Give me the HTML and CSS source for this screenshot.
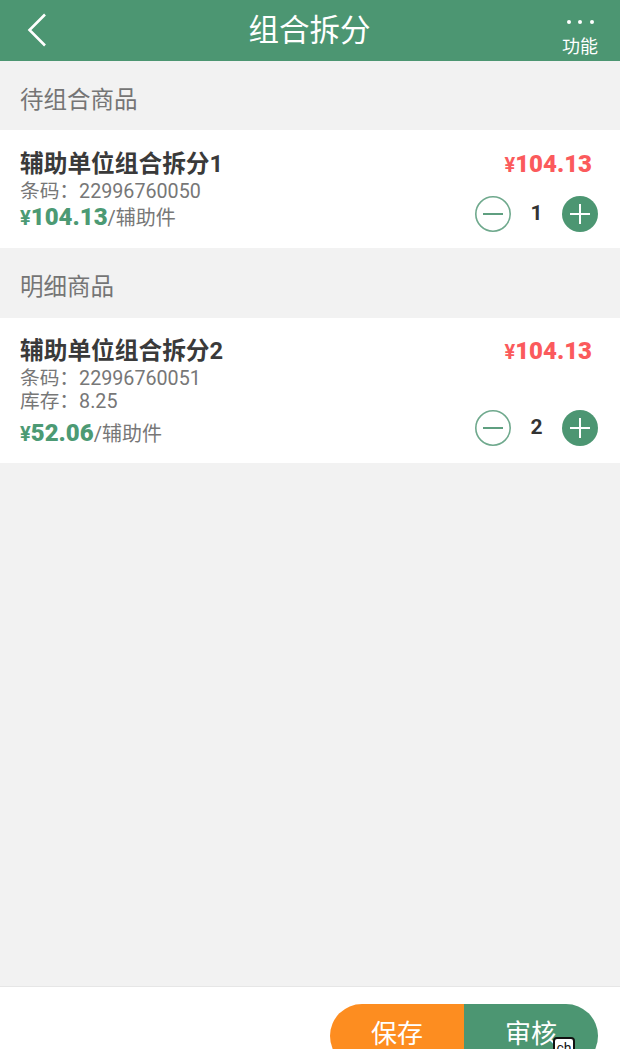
FILE: index.html
```html
<!DOCTYPE html>
<html>
  <head>
    <title>组合拆分</title>
    <link rel="stylesheet" href="styles.css">
  </head>
  <body class="page">
    <div class="topbar">
      <svg class="back" width="22" height="34" viewBox="0 0 22 34"><path d="M19 1.5 L3.5 17 L19 32.5" fill="none" stroke="#fff" stroke-width="2.6"/></svg>
      <div class="title">组合拆分</div>
      <div class="func">
        <div class="dots"><i></i><i></i><i></i></div>
        <div class="func-text">功能</div>
      </div>
    </div>

    <div class="section">待组合商品</div>
    <div class="card card-one">
      <div class="info">
        <div class="name">辅助单位组合拆分1</div>
        <div class="sub">条码：22996760050</div>
        <div class="price-line"><span class="price">¥<b>104.13</b></span>/辅助件</div>
      </div>
      <div class="side">
        <div class="total">¥<b>104.13</b></div>
        <div class="stepper">
          <svg width="36" height="36" viewBox="0 0 36 36"><circle cx="18" cy="18" r="17.2" fill="#fff" stroke="#6fa98d" stroke-width="1.6"/><path d="M8 18 H28" stroke="#5f9f80" stroke-width="2"/></svg>
          <span class="qty">1</span>
          <svg width="36" height="36" viewBox="0 0 36 36"><circle cx="18" cy="18" r="18" fill="#4c9672"/><path d="M8 18 H28 M18 8 V28" stroke="#fff" stroke-width="2"/></svg>
        </div>
      </div>
    </div>

    <div class="section section-two">明细商品</div>
    <div class="card card-two">
      <div class="info">
        <div class="name">辅助单位组合拆分2</div>
        <div class="sub">条码：22996760051</div>
        <div class="sub">库存：8.25</div>
        <div class="price-line gap"><span class="price">¥<b>52.06</b></span>/辅助件</div>
      </div>
      <div class="side">
        <div class="total">¥<b>104.13</b></div>
        <div class="stepper low">
          <svg width="36" height="36" viewBox="0 0 36 36"><circle cx="18" cy="18" r="17.2" fill="#fff" stroke="#6fa98d" stroke-width="1.6"/><path d="M8 18 H28" stroke="#5f9f80" stroke-width="2"/></svg>
          <span class="qty">2</span>
          <svg width="36" height="36" viewBox="0 0 36 36"><circle cx="18" cy="18" r="18" fill="#4c9672"/><path d="M8 18 H28 M18 8 V28" stroke="#fff" stroke-width="2"/></svg>
        </div>
      </div>
    </div>

    <div class="spacer"></div>

    <div class="footer">
      <div class="btns">
        <div class="btn save">保存</div>
        <div class="btn audit">审核</div>
      </div>
      <div class="ime">ch</div>
    </div>
  </body>
</html>
```

FILE: styles.css
```css
html, body {
  margin: 0;
  height: 100%;
  overflow: hidden;
}
.page {
  display: flex;
  flex-direction: column;
  height: 1049px;
  background-color: #f2f2f2;
  font-family: Roboto, "Noto Sans CJK SC", sans-serif;
  position: relative;
}
.topbar {
  height: 61px;
  flex: none;
  background-color: #4c9672;
  color: #fff;
  position: relative;
  display: flex;
  align-items: center;
  justify-content: center;
}
.back {
  position: absolute;
  left: 26px;
  top: 13px;
}
.title {
  font-size: 30.5px;
  line-height: 61px;
  margin-left: -1px;
}
.func {
  position: absolute;
  right: 22px;
  top: 0;
  width: 36px;
  text-align: center;
}
.dots {
  display: flex;
  justify-content: center;
  gap: 7.5px;
  margin-top: 20px;
  height: 5px;
}
.dots i {
  width: 4px;
  height: 4px;
  border-radius: 50%;
  background-color: #fff;
}
.func-text {
  font-size: 18px;
  line-height: 22px;
  margin-top: 11px;
}
.section {
  height: 69px;
  flex: none;
  padding-left: 20px;
  font-size: 23.5px;
  line-height: 78px;
  color: #757575;
  box-sizing: border-box;
}
.section-two {
  height: 70px;
}
.card {
  flex: none;
  background-color: #fff;
  display: flex;
  justify-content: space-between;
  padding: 0 22px 0 20px;
}
.card-one {
  height: 118px;
}
.card-two {
  height: 145px;
}
.name {
  font-size: 23.7px;
  font-weight: 700;
  line-height: 29px;
  margin-top: 19px;
  color: #3a3a3a;
}
.card-one .name {
  margin-top: 20px;
}
.sub {
  font-size: 19.7px;
  line-height: 24px;
  color: #777;
}
.name + .sub {
  margin-top: 1px;
  margin-bottom: -1px;
}
.price-line {
  font-size: 20px;
  line-height: 28px;
  color: #777;
}
.price-line.gap {
  margin-top: 5px;
}
.price {
  color: #4c9a74;
  font-weight: 700;
  font-size: 20px;
}
.price b {
  font-size: 24px;
}
.side {
  display: flex;
  flex-direction: column;
  align-items: flex-end;
}
.total {
  font-size: 20px;
  font-weight: 700;
  line-height: 30px;
  margin-top: 19px;
  margin-right: 6px;
  color: #fb5a5c;
}
.card-two .total {
  margin-top: 18px;
}
.total b {
  font-size: 24px;
}
.stepper {
  display: flex;
  align-items: center;
  margin-top: 16px;
}
.stepper.low {
  margin-top: 43px;
}
.qty {
  width: 51px;
  text-align: center;
  font-size: 21px;
  font-weight: 700;
  color: #333;
  margin-bottom: 3px;
}
.spacer {
  flex: 1;
}
.footer {
  height: 62px;
  flex: none;
  background-color: #fff;
  border-top: 1px solid #e6e6e6;
  position: relative;
}
.btns {
  display: flex;
  position: absolute;
  right: 22px;
  top: 17px;
  width: 268px;
  height: 64px;
  border-radius: 32px;
  overflow: hidden;
}
.btn {
  flex: 1;
  text-align: center;
  color: #fff;
  font-size: 26px;
  line-height: 60px;
}
.save {
  background-color: #fd8d20;
}
.audit {
  background-color: #4c9672;
}
.ime {
  position: absolute;
  left: 553px;
  top: 50px;
  width: 18px;
  height: 20px;
  border: 2px solid #111;
  border-radius: 4px;
  background-color: #fff;
  color: #111;
  font-size: 14px;
  line-height: 18px;
  text-align: center;
}
```
